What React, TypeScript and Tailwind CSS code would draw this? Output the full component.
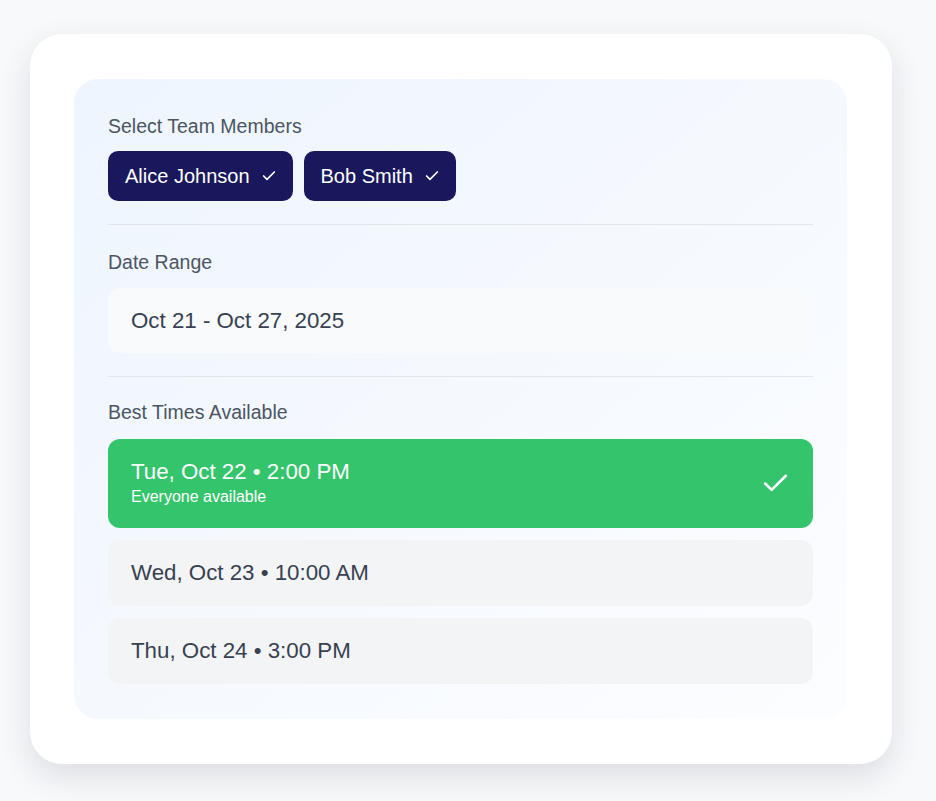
import { Check } from "lucide-react";

const members = ["Alice Johnson", "Bob Smith"];

const slots = [
  { label: "Tue, Oct 22 • 2:00 PM", note: "Everyone available", best: true },
  { label: "Wed, Oct 23 • 10:00 AM" },
  { label: "Thu, Oct 24 • 3:00 PM" },
];

function Label({ children }: { children: React.ReactNode }) {
  return <div className="text-[19.5px] leading-[27px] text-[#4b5563]">{children}</div>;
}

export default function App() {
  return (
    <div
      className="min-h-screen bg-[#f8f9fb] pl-[30px] pt-[34px]"
      style={{ fontFamily: '"Liberation Sans", Arial, sans-serif' }}
    >
      <div className="w-[862px] rounded-[32px] bg-white pb-[45px] pl-11 pr-[45px] pt-[45px] shadow-[0_12px_32px_rgba(15,23,42,0.12)]">
        <div className="rounded-3xl bg-gradient-to-br from-[#eef5fe] to-[#fcfdff] px-[34px] pb-[35px] pt-[34px]">
          {/* team members */}
          <section>
            <Label>Select Team Members</Label>
            <div className="mt-[11px] flex gap-[11px]">
              {members.map((name) => (
                <button
                  key={name}
                  type="button"
                  className="flex items-center gap-[11px] rounded-[10px] bg-[#1a185c] py-[11px] pl-[17px] pr-4 text-[20px] leading-[28px] text-white"
                >
                  {name}
                  <Check size={16} strokeWidth={2.5} />
                </button>
              ))}
            </div>
          </section>

          <div className="mb-6 mt-[23px] h-px bg-[#e2e5ea]" />

          {/* date range */}
          <section>
            <Label>Date Range</Label>
            <div className="mt-3 rounded-xl bg-[#f8fafc] px-[23px] py-[19px] text-[22.3px] leading-[27px] text-[#374151]">
              Oct 21 - Oct 27, 2025
            </div>
          </section>

          <div className="mb-[22px] mt-[23px] h-px bg-[#e2e5ea]" />

          {/* suggested slots */}
          <section>
            <Label>Best Times Available</Label>
            <div className="mt-[13px] flex flex-col gap-3">
              {slots.map((s) =>
                s.best ? (
                  <div
                    key={s.label}
                    className="flex items-center justify-between rounded-xl bg-[#34c46b] pb-5 pl-[23px] pr-[22px] pt-[19px] text-white"
                  >
                    <div>
                      <div className="text-[22.3px] leading-[28px]">{s.label}</div>
                      <div className="text-[16px] leading-[22px]">{s.note}</div>
                    </div>
                    <Check size={31} strokeWidth={2} />
                  </div>
                ) : (
                  <div
                    key={s.label}
                    className="rounded-xl bg-[#f3f4f6] px-[23px] py-[19px] text-[22.3px] leading-[28px] text-[#374151]"
                  >
                    {s.label}
                  </div>
                )
              )}
            </div>
          </section>
        </div>
      </div>
    </div>
  );
}
